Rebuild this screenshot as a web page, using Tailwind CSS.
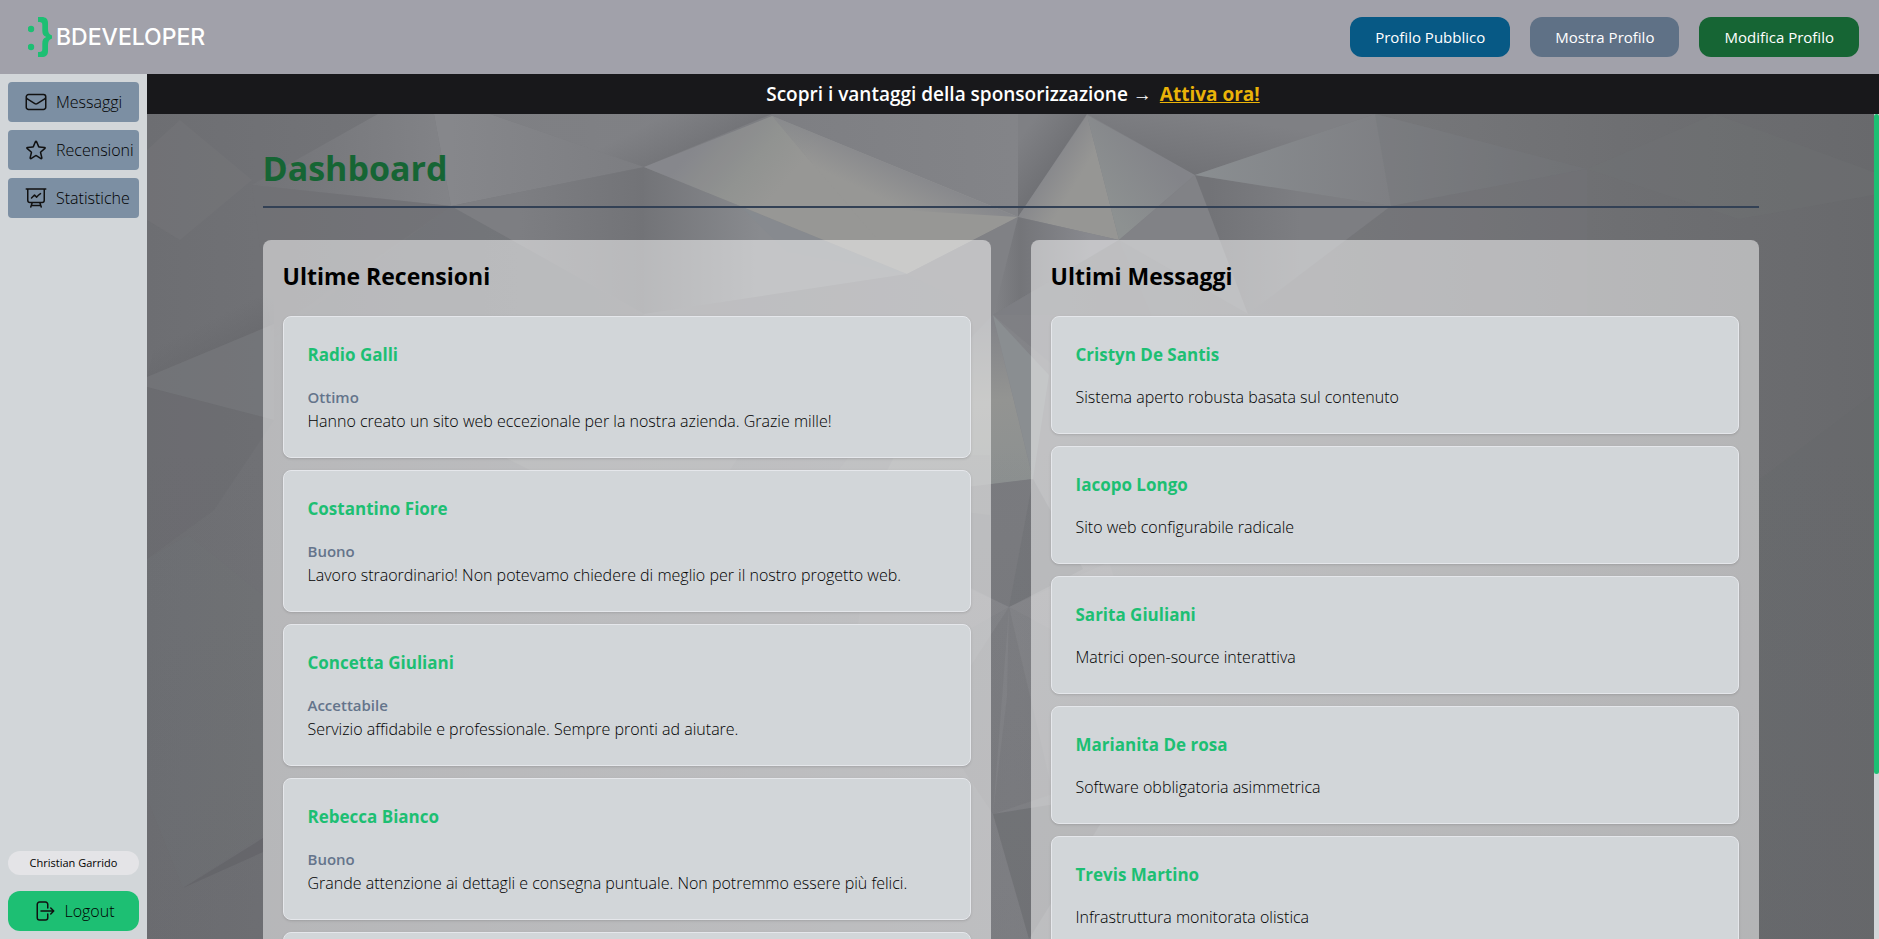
<!DOCTYPE html>
<html lang="it">
<head>
<meta charset="utf-8">
<title>BDeveloper - Dashboard</title>
<script src="https://cdn.jsdelivr.net/npm/@tailwindcss/browser@4"></script>
</head>
<body class="h-screen overflow-hidden flex flex-col font-['Open_Sans',sans-serif] text-black">

<header class="h-[74px] shrink-0 bg-[#a1a1aa] flex items-center justify-between px-5">
  <a href="#" class="flex items-center pl-2">
    <svg class="w-7 h-11" viewBox="0 0 28 44" fill="#1dbf73" aria-hidden="true">
      <circle cx="3" cy="14" r="3.2"/><circle cx="3" cy="32" r="3.2"/>
      <path d="M10 2h3.500c4.500 0 6.500 2 6.500 6v6c0 3.500 1 5.500 4 6.500v3c-3 1-4 3-4 6.500v6c0 4-2 6-6.500 6H10v-5h1.500c2.200 0 2.800-.8 2.800-3v-5.500c0-3.600 1.200-5.500 4-6.500-2.800-1-4-2.900-4-6.500V10c0-2.200-.6-3-2.800-3H10z"/>
    </svg>
    <span class="text-white font-medium text-[23px] leading-8 font-['Inter',sans-serif]">BDEVELOPER</span>
  </a>
  <nav class="flex gap-5 text-white text-[15px]">
    <a href="#" class="h-10 px-[25px] rounded-xl bg-[#075985] flex items-center">Profilo Pubblico</a>
    <a href="#" class="h-10 px-[25px] rounded-xl bg-[#5f7186] flex items-center">Mostra Profilo</a>
    <a href="#" class="h-10 px-[25px] rounded-xl bg-[#166534] flex items-center">Modifica Profilo</a>
  </nav>
</header>

<div class="flex flex-1 min-h-0">
  <aside class="w-[147px] shrink-0 bg-[#d2d6d9] p-2 flex flex-col justify-between">
    <nav class="flex flex-col gap-2 font-light text-base">
      <a href="#" class="h-10 rounded bg-[#7c8fa3] pl-4 flex items-center gap-2">
        <svg class="w-6 h-6 shrink-0" viewBox="0 0 24 24" fill="none" stroke="#111" stroke-width="1.500" stroke-linecap="round" stroke-linejoin="round"><path d="M21.750 6.750v10.500a2.250 2.250 0 0 1-2.250 2.250h-15a2.250 2.250 0 0 1-2.250-2.250V6.750m19.500 0A2.250 2.250 0 0 0 19.500 4.500h-15a2.250 2.250 0 0 0-2.250 2.250m19.500 0v.243a2.250 2.250 0 0 1-1.070 1.916l-7.500 4.615a2.250 2.250 0 0 1-2.360 0L3.320 8.910a2.250 2.250 0 0 1-1.070-1.916V6.750"/></svg>
        Messaggi</a>
      <a href="#" class="h-10 rounded bg-[#7c8fa3] pl-4 flex items-center gap-2">
        <svg class="w-6 h-6 shrink-0" viewBox="0 0 24 24" fill="none" stroke="#111" stroke-width="1.500" stroke-linecap="round" stroke-linejoin="round"><path d="M11.480 3.499a.562.562 0 0 1 1.040 0l2.125 5.111a.563.563 0 0 0 .475.345l5.518.442c.499.040.701.663.321.988l-4.204 3.602a.563.563 0 0 0-.182.557l1.285 5.385a.562.562 0 0 1-.840.610l-4.725-2.885a.562.562 0 0 0-.586 0L6.982 20.540a.562.562 0 0 1-.840-.610l1.285-5.386a.562.562 0 0 0-.182-.557l-4.204-3.602a.562.562 0 0 1 .321-.988l5.518-.442a.563.563 0 0 0 .475-.345L11.480 3.500Z"/></svg>
        Recensioni</a>
      <a href="#" class="h-10 rounded bg-[#7c8fa3] pl-4 flex items-center gap-2">
        <svg class="w-6 h-6 shrink-0" viewBox="0 0 24 24" fill="none" stroke="#111" stroke-width="1.500" stroke-linecap="round" stroke-linejoin="round"><path d="M3.750 3v11.250A2.250 2.250 0 0 0 6 16.500h2.250M3.750 3h-1.500m1.500 0h16.500m0 0h1.500m-1.500 0v11.250A2.250 2.250 0 0 1 18 16.500h-2.250m-7.500 0h7.500m-7.500 0-1 3m8.500-3 1 3m0 0 .5 1.500m-.5-1.500h-9.500m0 0-.5 1.500m.75-9 3-3 2.148 2.148A12.061 12.061 0 0 1 16.500 7.605"/></svg>
        Statistiche</a>
    </nav>
    <div class="flex flex-col gap-4">
      <p class="h-6 rounded-full bg-[#e4e4e7] flex items-center justify-center text-[11px]">Christian Garrido</p>
      <button type="button" class="h-10 rounded-xl bg-[#1dbf73] flex items-center justify-center gap-2 font-light text-base">
        <svg class="w-6 h-6 shrink-0" viewBox="0 0 24 24" fill="none" stroke="#111" stroke-width="1.500" stroke-linecap="round" stroke-linejoin="round"><path d="M15.750 9V5.250A2.250 2.250 0 0 0 13.500 3h-6a2.250 2.250 0 0 0-2.250 2.250v13.500A2.250 2.250 0 0 0 7.500 21h6a2.250 2.250 0 0 0 2.250-2.250V15m3 0 3-3m0 0-3-3m3 3H9"/></svg>
        Logout</button>
    </div>
  </aside>

  <div class="flex-1 min-w-0 flex flex-col">
    <div class="h-10 shrink-0 bg-[#18181b] flex items-center justify-center gap-2 text-white font-semibold text-[19px]">
      <span>Scopri i vantaggi della sponsorizzazione →</span>
      <a href="#" class="text-[#eab308] font-bold underline">Attiva ora!</a>
    </div>

    <div class="relative flex flex-1 min-h-0 bg-[#707175]">
      <!-- faceted backdrop -->
      <svg class="absolute inset-0 w-full h-full" viewBox="147 114 1732 825" preserveAspectRatio="none" aria-hidden="true">
        <defs>
          <linearGradient id="base" x1="0" x2="1"><stop offset="0" stop-color="#6d6e72"/><stop offset=".3" stop-color="#7b7c80"/><stop offset=".5" stop-color="#838488"/><stop offset=".7" stop-color="#77787b"/><stop offset=".85" stop-color="#6e6f72"/><stop offset="1" stop-color="#68696c"/></linearGradient>
          <linearGradient id="shade" x1="0" x2="0" y1="0" y2="1"><stop offset=".4" stop-color="#606166" stop-opacity="0"/><stop offset="1" stop-color="#606166" stop-opacity=".2"/></linearGradient>
          <linearGradient id="warm" gradientUnits="userSpaceOnUse" x1="700" y1="140" x2="770" y2="200"><stop offset="0" stop-color="#85868b"/><stop offset=".6" stop-color="#919391"/><stop offset="1" stop-color="#979795"/></linearGradient>
          <linearGradient id="warm2" gradientUnits="userSpaceOnUse" x1="897" y1="162" x2="880" y2="198"><stop offset="0" stop-color="#87888c"/><stop offset="1" stop-color="#87888c" stop-opacity="0"/></linearGradient>
          <linearGradient id="kite" gradientUnits="userSpaceOnUse" x1="1045" y1="160" x2="1078" y2="180"><stop offset="0" stop-color="#84858a"/><stop offset="1" stop-color="#969694"/></linearGradient>
          <linearGradient id="kiteR" gradientUnits="userSpaceOnUse" x1="1095" y1="190" x2="1155" y2="145"><stop offset="0" stop-color="#8d9191"/><stop offset="1" stop-color="#838489"/></linearGradient>
          <linearGradient id="leftTop" gradientUnits="userSpaceOnUse" x1="252" y1="0" x2="470" y2="0"><stop offset="0" stop-color="#727377"/><stop offset="1" stop-color="#848589"/></linearGradient>
          <linearGradient id="topFade" gradientUnits="userSpaceOnUse" x1="451" y1="0" x2="644" y2="0"><stop offset="0" stop-color="#86878b"/><stop offset="1" stop-color="#7c7d81"/></linearGradient>
          <linearGradient id="preDark" gradientUnits="userSpaceOnUse" x1="520" y1="0" x2="644" y2="0"><stop offset="0" stop-color="#7d7e82"/><stop offset="1" stop-color="#727377"/></linearGradient>
          <linearGradient id="darkL" gradientUnits="userSpaceOnUse" x1="640" y1="0" x2="760" y2="0"><stop offset="0" stop-color="#727377"/><stop offset="1" stop-color="#898b8f"/></linearGradient>
          <linearGradient id="mid" gradientUnits="userSpaceOnUse" x1="990" y1="0" x2="1090" y2="0"><stop offset="0" stop-color="#838488"/><stop offset=".3" stop-color="#747579"/><stop offset="1" stop-color="#88898e"/></linearGradient>
          <linearGradient id="edge" gradientUnits="userSpaceOnUse" x1="685" y1="105" x2="708" y2="150"><stop offset="0" stop-color="#818286"/><stop offset="1" stop-color="#6e6f73"/></linearGradient>
          <linearGradient id="notch" gradientUnits="userSpaceOnUse" x1="1018" y1="140" x2="1052" y2="165"><stop offset="0" stop-color="#7f8084"/><stop offset="1" stop-color="#717276"/></linearGradient>
          <linearGradient id="edge2" gradientUnits="userSpaceOnUse" x1="1190" y1="175" x2="1200" y2="114"><stop offset="0" stop-color="#717276"/><stop offset="1" stop-color="#7f8084"/></linearGradient>
          <linearGradient id="fade" gradientUnits="userSpaceOnUse" x1="1195" y1="175" x2="1590" y2="175"><stop offset="0" stop-color="#8a8e91"/><stop offset=".5" stop-color="#7e7f83"/><stop offset="1" stop-color="#6f7074"/></linearGradient>
          <linearGradient id="down" gradientUnits="userSpaceOnUse" x1="1210" y1="0" x2="1300" y2="0"><stop offset="0" stop-color="#727377"/><stop offset="1" stop-color="#7d7e82"/></linearGradient>
          <linearGradient id="core" gradientUnits="userSpaceOnUse" x1="993" y1="320" x2="1010" y2="480"><stop offset="0" stop-color="#828388"/><stop offset=".5" stop-color="#939492"/><stop offset="1" stop-color="#8c9090"/></linearGradient>
          <linearGradient id="wedge" gradientUnits="userSpaceOnUse" x1="200" y1="325" x2="225" y2="375"><stop offset="0" stop-color="#66676b" stop-opacity="0"/><stop offset=".7" stop-color="#66676b"/></linearGradient>
        </defs>
        <path fill="url(#base)" d="M147 114h1732v825H147z"/>
        <path fill="#77787c" d="M147 150l33-30 72 60-72 60-33-20z" opacity=".35"/>
        <path fill="url(#wedge)" d="M180 240l94-30v114l-127 53z" opacity=".7"/>
        <path fill="#77787c" d="M147 377l127-53v96l-127-33z" opacity=".55"/>
        <path fill="#64656a" d="M147 387l127 33-60 90-67 49z" opacity=".2"/>
        <path fill="#77787c" d="M147 559l41-24 75 60v240l-80 53-36-90z" opacity=".12"/>
        <path fill="#606165" d="M183 888l80-50v14z" opacity=".6"/>
        <path fill="url(#leftTop)" d="M252 185L378 114h56l17 92z"/>
        <path fill="url(#topFade)" d="M434 114h56l154 53-193 39z"/>
        <path fill="#717276" d="M252 185l199 21-180 125z" opacity=".45"/>
        <path fill="#727377" d="M451 206L271 340l300 60 73-86z" opacity=".45"/>
        <path fill="url(#edge)" d="M490 114h282l-128 53z" opacity=".75"/>
        <path fill="url(#preDark)" d="M451 206l193-39v147z"/>
        <path fill="url(#darkL)" d="M644 167l263 107-263 40z"/>
        <path fill="#858b8f" d="M740 206l167 68-120-22z" opacity=".6"/>
        <path fill="url(#warm)" d="M772 116l246 101-111 57-263-107z"/>
        <path fill="url(#warm2)" d="M772 116l246 101-170-10z"/>
        <path fill="#9a9a98" d="M772 116l135 158-263-107z" opacity=".08"/>
        <path fill="#7c7d81" d="M907 274l-263 40 230 120 119-119z" opacity=".4"/>
        <path fill="#808185" d="M1018 217l-111 57 86 41z"/>
        <path fill="url(#notch)" d="M1018 114h69l-69 103z"/>
        <path fill="url(#kite)" d="M1087 115l-69 102 101 23z"/>
        <path fill="url(#kiteR)" d="M1087 115l108 60-76 65z"/>
        <path fill="url(#edge2)" d="M1087 114h288l-180 61z"/>
        <path fill="url(#mid)" d="M1018 217l101 23-126 75z"/>
        <path fill="#7c7d81" d="M1119 240l-126 75 255-1z" opacity=".5"/>
        <path fill="#818286" d="M1195 175l-76 65 129 74z"/>
        <path fill="url(#down)" d="M1195 175l196 31-143 108z"/>
        <path fill="url(#fade)" d="M1375 114l212 55-196 37-196-31z"/>
        <path fill="#747579" d="M1375 114l212 55-196 37z" opacity=".35"/>
        <path fill="#737478" d="M1391 206l196-37v150l-339-5z" opacity=".4"/>
        <path fill="#747578" d="M1587 169l128-55 164 60v20l-140 25z" opacity=".22"/>
        <path fill="url(#core)" d="M993 315l40 164-160 20 60-120z"/>
        <path fill="#8a8e91" d="M993 315l56 60-16 104z"/>
        <path fill="#7a7b7f" d="M993 315l126-75 60 140-120-10z" opacity=".4"/>
        <path fill="#7a7b7f" d="M860 500l173-21-24 128-150-70z"/>
        <path fill="#66676b" d="M1033 479l50 90-74 38z" opacity=".5"/>
        <path fill="#898a8d" d="M1009 607l-140-70-20 160zM1009 607l100-45 40 120z" opacity=".5"/>
        <path fill="#707175" d="M1009 607l-16 207-60-90zM1009 607l-2 90-14 117 60-20z" opacity=".3"/>
        <path fill="#6b6c70" d="M993 814l126-20-90 145z" opacity=".6"/>
        <path fill="#868789" d="M500 455h240l-60 90zM850 455h140v60l-170-20z" opacity=".5"/>
        <path fill="#66676a" d="M1759 480l120-90v549h-120z" opacity=".2"/>
        <path fill="url(#shade)" d="M147 114h1732v825H147z"/>
      </svg>

      <main class="relative flex-1 min-w-0 overflow-hidden">
        <div class="max-w-[1536px] mx-auto px-5 pt-[34px]">
          <h1 class="text-[34px] leading-[40px] font-bold text-[#166534] pb-[18px] mb-8 border-b-2 border-[#334155]">Dashboard</h1>
          <div class="grid grid-cols-2 gap-10 items-start">
            <section class="rounded-lg bg-white/50 p-5">
              <h2 class="text-[23px] leading-8 font-bold mb-6">Ultime Recensioni</h2>
              <ul id="reviews" class="flex flex-col gap-3"></ul>
            </section>
            <section class="rounded-lg bg-white/50 p-5">
              <h2 class="text-[23px] leading-8 font-bold mb-6">Ultimi Messaggi</h2>
              <ul id="messages" class="flex flex-col gap-3"></ul>
            </section>
          </div>
        </div>
      </main>
      <div class="relative w-[5px] shrink-0 bg-[#d2d6d9]"><div class="h-4/5 rounded-full bg-[#1dbf73]"></div></div>
    </div>
  </div>
</div>

<script>
const reviews = [
  ['Radio Galli', 'Ottimo', 'Hanno creato un sito web eccezionale per la nostra azienda. Grazie mille!'],
  ['Costantino Fiore', 'Buono', 'Lavoro straordinario! Non potevamo chiedere di meglio per il nostro progetto web.'],
  ['Concetta Giuliani', 'Accettabile', 'Servizio affidabile e professionale. Sempre pronti ad aiutare.'],
  ['Rebecca Bianco', 'Buono', 'Grande attenzione ai dettagli e consegna puntuale. Non potremmo essere più felici.'],
  ['', '', '']
];
const messages = [
  ['Cristyn De Santis', 'Sistema aperto robusta basata sul contenuto'],
  ['Iacopo Longo', 'Sito web configurabile radicale'],
  ['Sarita Giuliani', 'Matrici open-source interattiva'],
  ['Marianita De rosa', 'Software obbligatoria asimmetrica'],
  ['Trevis Martino', 'Infrastruttura monitorata olistica']
];
const card = (name, body) => `<li class="rounded-lg border border-[#e5e7eb] bg-[#d2d6d9] shadow-sm p-6">
  <h3 class="text-[17px] leading-7 min-h-7 font-bold text-[#1dbf73] mb-4">${name}</h3>${body}</li>`;
document.getElementById('reviews').innerHTML = reviews.map(([n, r, t]) => card(n,
  `<p class="text-[15px] leading-6 min-h-6 font-semibold text-[#64748b]">${r}</p><p class="text-base leading-6 min-h-6 font-light">${t}</p>`)).join('');
document.getElementById('messages').innerHTML = messages.map(([n, t]) => card(n,
  `<p class="text-base leading-6 font-light">${t}</p>`)).join('');
</script>
</body>
</html>
